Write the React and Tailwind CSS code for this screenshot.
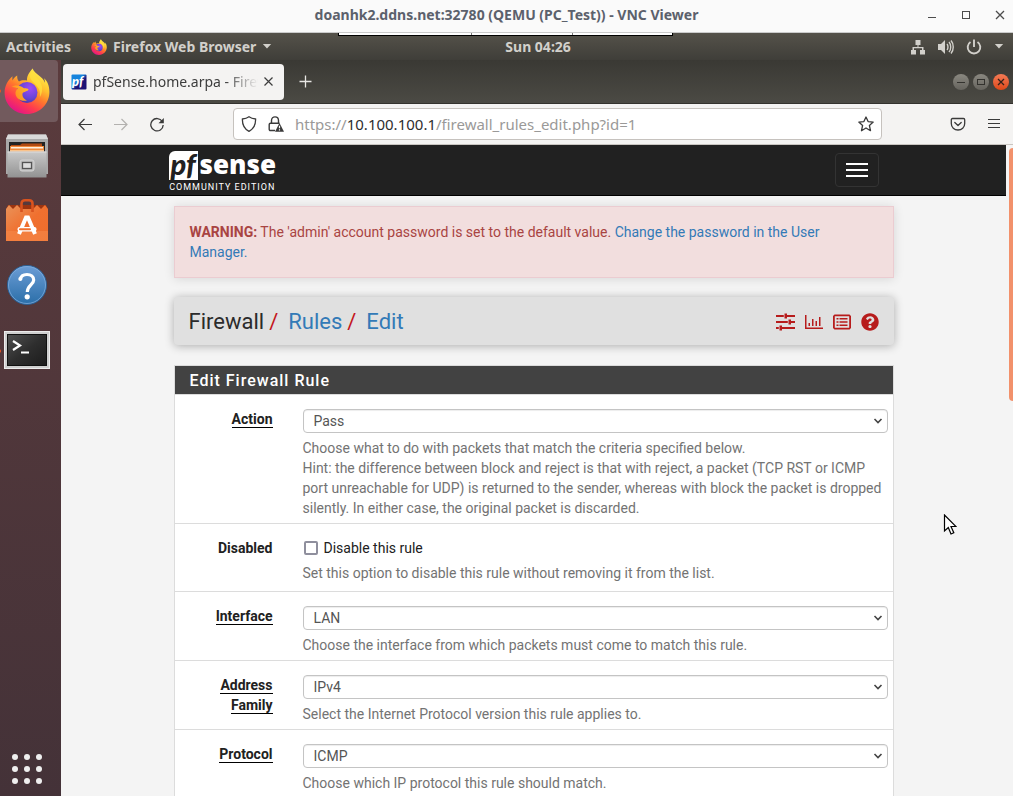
import React from "react";
import { FaQuestionCircle } from "react-icons/fa";

const uiFont = "font-['Noto_Sans','Open_Sans',sans-serif]";

function FirefoxLogo({ className, id }) {
  return (
    <svg viewBox="0 0 46 46" className={className} aria-hidden="true">
      <defs>
        <linearGradient id={id + "a"} x1="0.8" y1="0.05" x2="0.25" y2="0.95">
          <stop offset="0" stopColor="#fff44f" />
          <stop offset="0.3" stopColor="#ffc02e" />
          <stop offset="0.52" stopColor="#ff7a2c" />
          <stop offset="0.75" stopColor="#ff3b4e" />
          <stop offset="1" stopColor="#e31587" />
        </linearGradient>
        <radialGradient id={id + "b"} cx="0.65" cy="0.3" r="0.75">
          <stop offset="0" stopColor="#a04af5" />
          <stop offset="0.6" stopColor="#6b45d8" />
          <stop offset="1" stopColor="#4a3fa8" />
        </radialGradient>
        <linearGradient id={id + "c"} x1="1" y1="0" x2="0" y2="0.6">
          <stop offset="0" stopColor="#ffc02e" />
          <stop offset="1" stopColor="#ff8a1f" />
        </linearGradient>
      </defs>
      <path
        fill={"url(#" + id + "a)"}
        d="M28.500 0.500C27 3 22.500 6.500 23 12.500C20 12 17 12 15 13.500C13.500 12 13 9.500 13.200 7.500C11 8.500 9.500 10.500 8.500 12.500C8.300 11 8.300 9.500 8.500 8.300C4 12 0.600 18 0.600 24.500C0.600 37 10.600 46 23 46C35.500 46 45.400 36 45.400 24C45.400 17 43 12.500 40 10.200C40.800 12 41 13.500 41 14.800C38.500 8 31.500 7 28.500 0.500Z"
      />
      <circle cx="23" cy="24.500" r="10.500" fill={"url(#" + id + "b)"} />
      <path
        fill={"url(#" + id + "c)"}
        d="M7.500 19C10 16.500 17 17 19.500 20C21 20.500 24 20 24.500 21.500C24 23.500 19.500 23.500 18.500 25.500C18 29 20 31 23 32.500C17 34 11 30 11.500 24.500C12 22 13 21 14 20.500C11.500 19 9 19 7.500 19Z"
      />
      <path
        fill="#ffe23f"
        opacity="0.75"
        d="M28.500 0.500C27 4 24 8 28 13C32 17 37 20 36 29C40 22 38 15 33.500 10.500C31 8 29 5 28.500 0.500Z"
      />
    </svg>
  );
}

function FilesIcon() {
  return (
    <svg viewBox="0 0 44 46" className="h-[46px] w-11" aria-hidden="true">
      <defs>
        <linearGradient id="cab" x1="0" y1="0" x2="0" y2="1">
          <stop offset="0" stopColor="#c9c9c9" />
          <stop offset="1" stopColor="#929292" />
        </linearGradient>
      </defs>
      <path d="M3 1.500H41L43 6V41H1V6Z" fill="#a9a9a9" />
      <path d="M3 1.500H41L43 6H1Z" fill="#d9d9d9" />
      <rect x="4" y="9" width="36" height="12" fill="#242424" />
      <path d="M6 12H15L17 10.500H37V20H6Z" fill="#b24a12" />
      <rect x="5" y="13" width="34" height="7" fill="#f08a3c" />
      <rect x="6" y="14" width="32" height="1.500" fill="#fff0df" />
      <rect x="5" y="17" width="34" height="1.500" fill="#f9c38c" />
      <rect x="2.500" y="18.500" width="39" height="26" fill="url(#cab)" />
      <rect x="2.500" y="18.500" width="39" height="1" fill="#dddddd" />
      <rect x="15" y="27" width="14" height="11" rx="2" fill="#bdbdbd" stroke="#d5d5d5" />
      <rect x="17.500" y="29.500" width="9" height="6" fill="#dedede" stroke="#555" strokeWidth="1.300" />
    </svg>
  );
}

function SoftwareIcon() {
  return (
    <svg viewBox="0 0 44 44" className="h-11 w-11" aria-hidden="true">
      <defs>
        <linearGradient id="bag" x1="0" y1="0" x2="1" y2="1">
          <stop offset="0" stopColor="#e9935a" />
          <stop offset="0.5" stopColor="#f0702f" />
          <stop offset="1" stopColor="#ee6d2c" />
        </linearGradient>
      </defs>
      <path d="M3 6H41L43 10H1Z" fill="#9c3410" />
      <path d="M1 10L4 6L8 10L12 6L16 10H28L32 6L36 10L40 6L43 10V42H1Z" fill="url(#bag)" />
      <rect x="1" y="32" width="42" height="10" fill="#f5894a" opacity="0.600" />
      <path d="M16.500 13V4.500C16.500 2 18 1.300 20 1.300H24C26 1.300 27.500 2 27.500 4.500V13" fill="none" stroke="#d9531e" strokeWidth="2.600" />
      <path d="M14 35L21 18.500H23L30 35" fill="none" stroke="#fff" strokeWidth="4" />
      <rect x="12.500" y="28" width="19" height="4.500" rx="2" fill="#fff" />
      <rect x="14" y="29.300" width="12" height="2" rx="1" fill="#f0702f" />
    </svg>
  );
}

function HelpIcon() {
  return (
    <svg viewBox="0 0 42 42" className="h-[42px] w-[42px]" aria-hidden="true">
      <defs>
        <linearGradient id="hlp" x1="0" y1="0" x2="0" y2="1">
          <stop offset="0" stopColor="#6c9dd6" />
          <stop offset="1" stopColor="#2a6ea8" />
        </linearGradient>
      </defs>
      <circle cx="21" cy="20" r="19.500" fill="url(#hlp)" stroke="#2b5f93" />
      <circle cx="21" cy="20" r="18.500" fill="none" stroke="#86b1e0" strokeWidth="1" opacity="0.700" />
      <path
        d="M14.500 14.500C14.800 11 17.500 9.500 21 9.500C25 9.500 27.700 11.500 27.700 15C27.700 19.500 21.500 20 21.300 27"
        fill="none"
        stroke="#fff"
        strokeWidth="3.200"
      />
      <circle cx="14.300" cy="14" r="2" fill="#fff" />
      <circle cx="21.200" cy="31.800" r="2.600" fill="#fff" />
    </svg>
  );
}

function TerminalIcon() {
  return (
    <svg viewBox="0 0 46 40" className="h-10 w-[46px]" aria-hidden="true">
      <defs>
        <linearGradient id="trm" x1="0" y1="0" x2="1" y2="1">
          <stop offset="0" stopColor="#505050" />
          <stop offset="0.5" stopColor="#2e2e2e" />
          <stop offset="1" stopColor="#1c1c1c" />
        </linearGradient>
      </defs>
      <rect x="0.500" y="0.500" width="45" height="37" fill="#cfcfcf" stroke="#ececec" />
      <rect x="3.500" y="3.500" width="39" height="31" fill="url(#trm)" stroke="#111" />
      <path d="M9 10L16 14.500L9 19" fill="none" stroke="#fff" strokeWidth="2.200" />
      <rect x="17" y="20.500" width="8" height="2" fill="#fff" />
    </svg>
  );
}

function DockItem({ label, running, active, children }) {
  return (
    <div className="relative">
      <button
        type="button"
        aria-label={label}
        className={
          active
            ? "flex h-[62px] w-[58px] items-center justify-center rounded-r bg-[#725a5d] pr-1"
            : "flex h-[62px] w-[58px] items-center justify-center pr-1"
        }
      >
        {children}
      </button>
      {running && <span className="absolute top-[29px] -left-[3px] h-1 w-1 rounded-full bg-[#e95420]" />}
    </div>
  );
}

function TitleBar() {
  return (
    <header className="relative flex h-[33px] shrink-0 items-center justify-center border-b border-[#cbcbcb] bg-[#fafafa]">
      <h1 className={uiFont + " pb-1 text-[14px] font-bold text-[#5c616c]"}>
        doanhk2.ddns.net:32780 (QEMU (PC_Test)) - VNC Viewer
      </h1>
      <div className="absolute top-0 right-[7px] flex h-[29px] items-center gap-[22px] text-[#4c4c4c]">
        <button type="button" aria-label="Minimize window">
          <svg viewBox="0 0 12 12" className="size-3"><path d="M2 8.500H10" stroke="currentColor" /></svg>
        </button>
        <button type="button" aria-label="Maximize window">
          <svg viewBox="0 0 12 12" className="size-3"><rect x="2.500" y="2.500" width="7" height="7" fill="none" stroke="currentColor" /></svg>
        </button>
        <button type="button" aria-label="Close window">
          <svg viewBox="0 0 12 12" className="size-3"><path d="M2 2L10 10M10 2L2 10" stroke="currentColor" strokeWidth="1.300" /></svg>
        </button>
      </div>
    </header>
  );
}

function SystemBar() {
  return (
    <div
      className={
        uiFont +
        " relative grid h-[27px] shrink-0 grid-cols-[8fr_auto_7fr] items-center bg-linear-to-b from-[#55524a] to-[#3f3e39] text-[14px] font-bold text-[#d2d0cb]"
      }
    >
      <div className="absolute top-0 left-1/3 flex h-[3px] w-[335px] border-x border-b border-black bg-white">
        <span className="w-[133px] border-r border-[#777]" />
        <span className="w-[101px] border-r border-[#777]" />
      </div>
      <div className="flex items-center gap-5 pl-[6px]">
        <button type="button">Activities</button>
        <button type="button" className="flex items-center gap-[6px]">
          <FirefoxLogo id="fs" className="size-4" />
          Firefox Web Browser
          <svg viewBox="0 0 10 6" className="h-[5px] w-[10px]"><path d="M0 0H10L5 5.500Z" fill="currentColor" /></svg>
        </button>
      </div>
      <button type="button">Sun 04:26</button>
      <div className="flex items-center justify-end gap-3 pr-[9px]">
        <svg viewBox="0 0 16 16" className="size-4" aria-hidden="true">
          <path d="M5.500 1h5v5h-2v2h5v3H15v4.500h-5V11h2V9.300H4V11h2v4.500H1V11h1.500V8h5V6h-2z" fill="currentColor" />
        </svg>
        <svg viewBox="0 0 16 16" className="size-4" aria-hidden="true">
          <path d="M0 5H3L7 1V15L3 11H0Z" fill="currentColor" />
          <path d="M9 5C10.300 6.500 10.300 9.500 9 11M11 3C13.300 5.500 13.300 10.500 11 13M13 1.500C16 5 16 11 13 14.500" fill="none" stroke="currentColor" strokeWidth="1.400" />
        </svg>
        <svg viewBox="0 0 16 16" className="size-4" aria-hidden="true">
          <path d="M4.500 3A6.300 6.300 0 1 0 11.500 3M8 0.500V8" fill="none" stroke="currentColor" strokeWidth="1.900" />
        </svg>
        <svg viewBox="0 0 10 6" className="h-[5px] w-[10px]" aria-hidden="true"><path d="M0 0H10L5 5.500Z" fill="currentColor" /></svg>
      </div>
    </div>
  );
}

function PfMark({ id }) {
  return (
    <svg viewBox="0 0 16 16" className="size-4 shrink-0" aria-hidden="true">
      <defs>
        <linearGradient id={id} x1="0" y1="0" x2="1" y2="1">
          <stop offset="0.4" stopColor="#1583dc" />
          <stop offset="0.6" stopColor="#1c1275" />
        </linearGradient>
      </defs>
      <rect x="0.500" y="0.500" width="15" height="15" rx="1" fill={"url(#" + id + ")"} />
      <text x="1" y="12" fill="#fff" fontSize="13" fontWeight="900" fontStyle="italic" fontFamily="Lato, sans-serif">pf</text>
    </svg>
  );
}

function TabStrip() {
  return (
    <div className={uiFont + " flex h-11 shrink-0 items-center border-b border-[#33322e] bg-linear-to-b from-[#3a3934] to-[#4b4a44] pr-1 pl-[2px]"}>
      <div className="flex h-9 w-[221px] items-center gap-[6px] rounded bg-[#f4f3f2] px-2">
        <PfMark id="fav" />
        <span className="min-w-0 flex-1 overflow-hidden mask-r-from-80% text-[14px] whitespace-nowrap text-[#3d3d3d]">
          pfSense.home.arpa - Firewall
        </span>
        <button type="button" aria-label="Close tab" className="pr-[3px]">
          <svg viewBox="0 0 9 9" className="size-[9px]"><path d="M0.500 0.500L8.500 8.500M8.500 0.500L0.500 8.500" stroke="#3d3d3d" strokeWidth="1.200" /></svg>
        </button>
      </div>
      <button type="button" aria-label="New tab" className="ml-[15px]">
        <svg viewBox="0 0 13 13" className="size-[13px]"><path d="M6.500 0.500V12.500M0.500 6.500H12.500" stroke="#e8e7e4" strokeWidth="1.300" /></svg>
      </button>
      <div className="ml-auto flex gap-1">
        <button type="button" aria-label="Minimize browser" className="flex size-4 items-center justify-center rounded-full bg-linear-to-b from-[#8a8880] to-[#66645e]">
          <svg viewBox="0 0 10 10" className="size-[10px]"><path d="M1 5.500H9" stroke="#33322e" /></svg>
        </button>
        <button type="button" aria-label="Maximize browser" className="flex size-4 items-center justify-center rounded-full bg-linear-to-b from-[#8a8880] to-[#66645e]">
          <svg viewBox="0 0 10 10" className="size-[10px]"><rect x="1.500" y="2.500" width="7" height="5" fill="none" stroke="#33322e" /></svg>
        </button>
        <button type="button" aria-label="Close browser" className="flex size-4 items-center justify-center rounded-full bg-linear-to-b from-[#f47a54] to-[#dd4714]">
          <svg viewBox="0 0 10 10" className="size-[10px]"><path d="M2 2L8 8M8 2L2 8" stroke="#33211a" strokeWidth="1.300" /></svg>
        </button>
      </div>
    </div>
  );
}

function Toolbar() {
  return (
    <div className="flex h-[41px] shrink-0 items-center border-b border-[#c9c5c1] bg-[#f4f3f2] px-4 text-[#3a3a3a]">
      <div className="flex items-center gap-5">
        <button type="button" aria-label="Back">
          <svg viewBox="0 0 16 16" className="size-4" fill="none" stroke="currentColor" strokeWidth="1.200"><path d="M15 8.500H2M7.500 3L2 8.500L7.500 14" /></svg>
        </button>
        <button type="button" aria-label="Forward" className="text-[#b3b1af]">
          <svg viewBox="0 0 16 16" className="size-4" fill="none" stroke="currentColor" strokeWidth="1.200"><path d="M1 8.500H14M8.500 3L14 8.500L8.500 14" /></svg>
        </button>
        <button type="button" aria-label="Reload">
          <svg viewBox="0 0 16 16" className="size-4" fill="none" stroke="currentColor" strokeWidth="1.300">
            <path d="M13.300 5.500A6.200 6.200 0 1 0 14.200 9" />
            <path d="M14.800 2V7.300H9.500Z" fill="currentColor" stroke="none" />
          </svg>
        </button>
      </div>
      <div className="ml-[68px] flex h-8 max-w-[649px] min-w-0 flex-1 items-center gap-[11px] rounded border border-[#c6c2be] bg-white px-[7px]">
        <svg viewBox="0 0 16 16" className="size-4 shrink-0" fill="none" stroke="currentColor" strokeWidth="1.300" aria-hidden="true">
          <path d="M8 0.800C10 2.300 12 2.800 14.600 3C14.800 9 12.500 13 8 15.300C3.500 13 1.200 9 1.400 3C4 2.800 6 2.300 8 0.800Z" />
        </svg>
        <svg viewBox="0 0 16 16" className="size-4 shrink-0" aria-hidden="true">
          <path d="M3.500 7V4.500C3.500 -0.300 10.500 -0.300 10.500 4.500V7" fill="none" stroke="currentColor" strokeWidth="1.400" />
          <path d="M7 14.500H2.500C1.600 14.500 1.200 14 1.200 13.300V8.500C1.200 7.600 1.600 7.200 2.500 7.200H11.500" fill="none" stroke="currentColor" strokeWidth="1.400" />
          <path d="M11.500 7L16 15.700H7Z" fill="currentColor" />
          <path d="M11.500 9.800V12.300M11.500 13.300V14.500" stroke="#fff" strokeWidth="1.200" />
        </svg>
        <p className={uiFont + " min-w-0 flex-1 truncate text-[15px] text-[#9a9998]"}>
          https://<span className="text-[#2e2e2e]">10.100.100.1</span>/firewall_rules_edit.php?id=1
        </p>
        <button type="button" aria-label="Bookmark this page">
          <svg viewBox="0 0 16 16" className="size-4" fill="none" stroke="currentColor" strokeWidth="1.300" strokeLinejoin="round">
            <path d="M8 1L10.100 5.600L15.200 6.100L11.400 9.500L12.500 14.700L8 12L3.500 14.700L4.600 9.500L0.800 6.100L5.900 5.600Z" />
          </svg>
        </button>
      </div>
      <div className="ml-auto flex items-center gap-5 pl-4">
        <button type="button" aria-label="Save to Pocket">
          <svg viewBox="0 0 16 16" className="size-4" fill="none" stroke="currentColor" strokeWidth="1.300" strokeLinecap="round" strokeLinejoin="round">
            <path d="M2.500 2.500H13.500C14.300 2.500 14.700 3 14.700 3.700V7.500C14.700 11.500 11.700 14 8 14S1.300 11.500 1.300 7.500V3.700C1.300 3 1.700 2.500 2.500 2.500Z" />
            <path d="M4.800 6.500L8 9.500L11.200 6.500" />
          </svg>
        </button>
        <button type="button" aria-label="Open menu" className="-mr-[5px]">
          <svg viewBox="0 0 16 16" className="size-4" stroke="currentColor"><path d="M2 3.500H14M2 7.500H14M2 11.500H14" strokeWidth="1.200" /></svg>
        </button>
      </div>
    </div>
  );
}

function PfHeader() {
  return (
    <div className="h-[51px] border-b border-black bg-[#212121]">
      <div className="mx-auto flex h-full max-w-[750px] items-center justify-between pr-[30px] pl-[10px]">
        <a href="#home" className="flex flex-col items-center pt-[2px] text-white">
          <span className="flex h-[30px] items-center">
            <span className="flex size-[29px] items-center justify-center rounded-tl-md bg-white pb-1 font-['Lato',sans-serif] text-[29px] leading-none font-black text-[#212121] italic">
              pf
            </span>
            <span className="pb-[2px] pl-[2px] font-['Open_Sans',sans-serif] text-[26px] leading-none font-extrabold">sense</span>
          </span>
          <span className="mt-[2px] font-['Roboto',sans-serif] text-[9px] leading-[10px] tracking-[1px]">COMMUNITY EDITION</span>
        </a>
        <button type="button" aria-label="Toggle navigation" className="flex h-[34px] w-11 flex-col items-center justify-center gap-1 rounded border border-[#333]">
          <span className="h-[2px] w-[22px] bg-white" />
          <span className="h-[2px] w-[22px] bg-white" />
          <span className="h-[2px] w-[22px] bg-white" />
        </button>
      </div>
    </div>
  );
}

function Row({ label, htmlFor, underlined = true, padding = "pt-[14px] pb-[5px]", children }) {
  return (
    <div className={"flex gap-[30px] border-b border-[#dcdcdc] pr-[5px] " + padding}>
      <label htmlFor={htmlFor} className="w-[98px] shrink-0 pl-8 text-right font-bold text-[#212121]">
        <span className={underlined ? "border-b border-black" : ""}>{label}</span>
      </label>
      <div className="min-w-0 flex-1">{children}</div>
    </div>
  );
}

function SelectRow({ id, label, value, children }) {
  return (
    <Row label={label} htmlFor={id}>
      <div className="relative">
        <select
          id={id}
          defaultValue={value}
          className="block h-6 w-full appearance-none rounded border border-[#c4c4c4] bg-white px-[10px] text-[14px] leading-5 text-[#555] shadow-[inset_0_1px_1px_rgba(0,0,0,0.075)]"
        >
          <option>{value}</option>
        </select>
        <svg viewBox="0 0 10 6" className="pointer-events-none absolute top-[9px] right-[5px] h-[6px] w-[10px]" aria-hidden="true">
          <path d="M1.500 1L5 4.500L8.500 1" fill="none" stroke="#444" strokeWidth="1.600" />
        </svg>
      </div>
      <p className="mt-[5px] text-[#737373]">{children}</p>
    </Row>
  );
}

function PageHeading() {
  return (
    <div className="mt-[19px] flex h-12 items-center justify-between rounded bg-[#e0e0e0] px-[15px] pt-[2px] shadow-[0_1px_10px_rgba(0,0,0,0.3)]">
      <nav className="flex text-[22px] text-[#2b2b2b]">
        <span>Firewall</span>
        <span className="mr-[10px] ml-[5px] text-[#c4161c]">/</span>
        <a href="#rules" className="text-[#337ab7]">Rules</a>
        <span className="mr-[10px] ml-[5px] text-[#c4161c]">/</span>
        <a href="#edit" className="text-[#337ab7]">Edit</a>
      </nav>
      <div className="flex items-center gap-[10px] text-[#b71c1c]">
        <a href="#settings" aria-label="Related settings">
          <svg viewBox="0 0 19 18" className="h-[18px] w-[19px]" fill="currentColor">
            <path d="M0 2H19V4H0ZM0 8H19V10H0ZM0 14H19V16H0Z" />
            <path d="M8.500 0.500H11V5.500H8.500ZM12.500 6.500H15V11.500H12.500ZM3.500 12.500H6V17.500H3.500Z" />
            <path d="M7.800 2H8.500V4H7.800ZM11.800 8H12.500V10H11.800ZM2.800 14H3.500V16H2.800Z" fill="#e0e0e0" />
          </svg>
        </a>
        <a href="#status" aria-label="Related status">
          <svg viewBox="0 0 18 18" className="size-[18px]" fill="currentColor">
            <path d="M0 2H1.500V14.500H18V16H0ZM3.500 10H5V13H3.500ZM7 6H8.500V13H7ZM10.500 8H12V13H10.500ZM14 4H15.500V13H14Z" />
          </svg>
        </a>
        <a href="#logs" aria-label="Related log entries">
          <svg viewBox="0 0 18 18" className="size-[18px]" fill="currentColor">
            <path fillRule="evenodd" d="M1.500 1.500H16.500L18 3V15L16.500 16.500H1.500L0 15V3ZM1.800 3.300V14.700H16.200V3.300Z" />
            <path d="M3.500 5H5.500V6.500H3.500ZM3.500 8.300H5.500V9.800H3.500ZM3.500 11.600H5.500V13.100H3.500ZM6.500 5H14.500V6.500H6.500ZM6.500 8.300H14.500V9.800H6.500ZM6.500 11.600H14.500V13.100H6.500Z" />
          </svg>
        </a>
        <a href="#help" aria-label="Help for this page"><FaQuestionCircle className="size-[18px]" /></a>
      </div>
    </div>
  );
}

function PfPage() {
  return (
    <main className="flex min-h-0 flex-1 overflow-hidden bg-[#f4f4f4] font-['Roboto',sans-serif] text-[14px] leading-5">
      <div className="min-w-0 flex-1">
        <PfHeader />
        <div className="mx-auto max-w-[750px] px-[15px] pt-[10px]">
          <div role="alert" className="border border-[#ebccd1] bg-[#f2dede] p-[15px] text-[#a94442] shadow-[0_1px_10px_rgba(0,0,0,0.12)]">
            <strong>WARNING:</strong> The 'admin' account password is set to the default value.{" "}
            <a href="#users" className="text-[#337ab7]">Change the password in the User Manager.</a>
          </div>
          <PageHeading />
          <form className="mt-5 border border-[#dcdcdc] bg-white">
            <h2 className="h-[29px] border-b border-[#dcdcdc] bg-[#424242] bg-clip-padding px-[15px] pt-px text-[16px] leading-7 font-medium tracking-[1px] text-white">
              Edit Firewall Rule
            </h2>
            <SelectRow id="action" label="Action" value="Pass">
              Choose what to do with packets that match the criteria specified below.
              <br />
              Hint: the difference between block and reject is that with reject, a packet (TCP RST or ICMP port unreachable
              for UDP) is returned to the sender, whereas with block the packet is dropped silently. In either case, the
              original packet is discarded.
            </SelectRow>
            <Row label="Disabled" htmlFor="disabled" underlined={false} padding="pt-[14px] pb-2">
              <label className="flex items-center gap-[6px] text-[#212121]">
                <input id="disabled" type="checkbox" className="ml-px size-[14px] appearance-none rounded-xs border-2 border-[#8f8f9d] bg-white" />
                Disable this rule
              </label>
              <p className="mt-[5px] text-[#737373]">Set this option to disable this rule without removing it from the list.</p>
            </Row>
            <SelectRow id="interface" label="Interface" value="LAN">
              Choose the interface from which packets must come to match this rule.
            </SelectRow>
            <SelectRow id="family" label="Address Family" value="IPv4">
              Select the Internet Protocol version this rule applies to.
            </SelectRow>
            <SelectRow id="protocol" label="Protocol" value="ICMP">
              Choose which IP protocol this rule should match.
            </SelectRow>
          </form>
        </div>
      </div>
      <div className="w-[7px] shrink-0 pt-[3px] pl-[3px]">
        <div className="h-[253px] rounded-l-sm bg-[#f2916b]" />
      </div>
    </main>
  );
}

export default function App() {
  return (
    <div className="relative flex h-screen flex-col overflow-hidden">
      <TitleBar />
      <SystemBar />
      <div className="flex min-h-0 flex-1">
        <nav aria-label="Dock" className="flex w-[61px] shrink-0 flex-col gap-[3px] bg-linear-to-b from-[#5b3b3d] to-[#443238]">
          <DockItem label="Firefox" running active><FirefoxLogo id="fb" className="size-[46px]" /></DockItem>
          <DockItem label="Files"><FilesIcon /></DockItem>
          <DockItem label="Ubuntu Software"><SoftwareIcon /></DockItem>
          <DockItem label="Help"><HelpIcon /></DockItem>
          <DockItem label="Terminal" running><TerminalIcon /></DockItem>
          <button type="button" aria-label="Show applications" className="mt-auto mb-[11px] ml-[11px] size-8">
            <svg viewBox="0 0 32 32" className="size-8" fill="#efefef">
              <circle cx="4" cy="4" r="3" /><circle cx="16" cy="4" r="3" /><circle cx="28" cy="4" r="3" />
              <circle cx="4" cy="16" r="3" /><circle cx="16" cy="16" r="3" /><circle cx="28" cy="16" r="3" />
              <circle cx="4" cy="28" r="3" /><circle cx="16" cy="28" r="3" /><circle cx="28" cy="28" r="3" />
            </svg>
          </button>
        </nav>
        <div className="flex min-w-0 flex-1 flex-col">
          <TabStrip />
          <Toolbar />
          <PfPage />
        </div>
      </div>
      <svg viewBox="0 0 14 22" className="pointer-events-none absolute top-[514px] left-[943px] h-[22px] w-[14px]" aria-hidden="true">
        <path d="M1.500 1V17L5.300 13.500L8 20L10.800 18.800L8 12.500H13Z" fill="#fff" stroke="#000" strokeWidth="1.200" />
      </svg>
    </div>
  );
}
